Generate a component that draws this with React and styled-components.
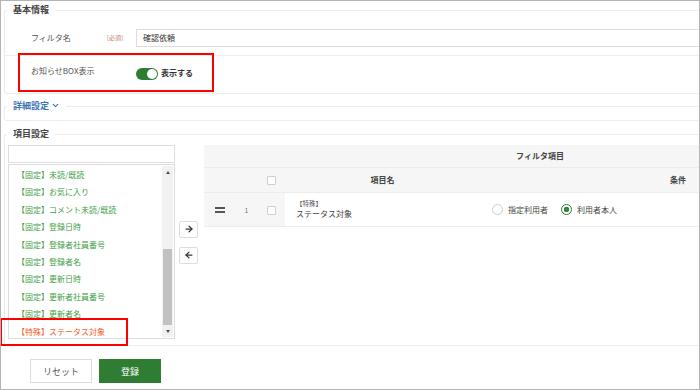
import styled, { createGlobalStyle } from 'styled-components';
import { ArrowRight, ArrowLeft, ChevronDown } from 'lucide-react';

const items = [
  { tag: '固定', name: '未読/既読' },
  { tag: '固定', name: 'お気に入り' },
  { tag: '固定', name: 'コメント未読/既読' },
  { tag: '固定', name: '登録日時' },
  { tag: '固定', name: '登録者社員番号' },
  { tag: '固定', name: '登録者名' },
  { tag: '固定', name: '更新日時' },
  { tag: '固定', name: '更新者社員番号' },
  { tag: '固定', name: '更新者名' },
  { tag: '特殊', name: 'ステータス対象', special: true },
];

const GlobalStyle = createGlobalStyle`
  body {
    margin: 0;
    background: #fff;
    font-family: "Noto Sans CJK JP", "Noto Sans", sans-serif;
    color: #555;
  }
  * { box-sizing: border-box; }
`;

const Frame = styled.div`
  position: relative;
  width: 700px;
  height: 390px;
  border: 1px solid #b4b4b4;
  overflow: hidden;
  background: #fff;
`;

const Inner = styled.div`
  width: 900px;
  padding: 2px 0 0 3px;
`;

const Fieldset = styled.fieldset`
  margin: ${p => p.$gap || 0}px 0 0;
  padding: ${p => p.$pt || 0}px 0 ${p => p.$pb || 0}px;
  border: 1px solid #ececec;
  border-right: none;
  border-radius: 3px;
  min-width: 0;
`;

const Legend = styled.legend`
  margin-left: 2px;
  padding: 0 6px;
  font-size: 9px;
  font-weight: bold;
  line-height: 14px;
  color: ${p => (p.$link ? '#3b74b8' : '#444')};

  svg {
    vertical-align: -1px;
    margin-left: 2px;
  }
`;

const FormRow = styled.div`
  position: relative;
  display: flex;
  align-items: ${p => (p.$top ? 'flex-start' : 'center')};
  padding: ${p => p.$pad};
  padding-left: 26px;
  border-bottom: ${p => (p.$last ? 'none' : '1px solid #eee')};
  font-size: 8px;
  line-height: 12px;
`;

const Label = styled.div`
  width: ${p => p.$w}px;
  color: #555;
`;

const Required = styled.span`
  width: 29px;
  font-size: 6px;
  color: #c07a6a;
`;

const TextInput = styled.div`
  flex: 1;
  height: 18px;
  border: 1px solid #ddd;
  padding: 0 6px;
  font-size: 8px;
  line-height: 16px;
  color: #333;
`;

const Toggle = styled.span`
  display: inline-flex;
  justify-content: flex-end;
  align-items: center;
  width: 22px;
  height: 12px;
  margin-top: 3px;
  padding: 1px;
  border-radius: 6px;
  background: #2e7d32;

  &::after {
    content: '';
    width: 10px;
    height: 10px;
    border-radius: 50%;
    background: #fff;
  }
`;

const ToggleText = styled.span`
  margin: 2px 0 0 3px;
  font-weight: bold;
  color: #333;
`;

const Columns = styled.div`
  display: flex;
  padding-left: 3px;
`;

const LeftCol = styled.div`
  width: 167px;
  display: flex;
  flex-direction: column;
  gap: 1px;
`;

const Search = styled.div`
  height: 18px;
  border: 1px solid #ddd;
`;

const ListBox = styled.div`
  display: flex;
  height: 175px;
  border: 1px solid #ddd;
  padding: 1px 1px 1px 0;
`;

const List = styled.ul`
  flex: 1;
  margin: 0;
  padding: 0 0 0 8px;
  list-style: none;
`;

const Item = styled.li`
  font-size: 8px;
  line-height: 17.4px;
  white-space: nowrap;
  color: ${p => (p.$special ? '#f4621f' : '#43a047')};
`;

const Scrollbar = styled.div`
  width: 11px;
  display: flex;
  flex-direction: column;
  background: #f1f1f1;
`;

const ScrollArrow = styled.div`
  height: 12px;
  display: flex;
  align-items: center;
  justify-content: center;

  &::after {
    content: '';
    border-left: 2.5px solid transparent;
    border-right: 2.5px solid transparent;
    ${p => (p.$down ? 'border-top' : 'border-bottom')}: 3px solid #505050;
  }
`;

const Track = styled.div`
  flex: 1;
  display: flex;
  flex-direction: column;
  justify-content: flex-end;
  padding: 0 1px;
`;

const Thumb = styled.div`
  height: 76px;
  background: #c1c1c1;
`;

const MoveCol = styled.div`
  width: 19px;
  margin-left: 4px;
  display: flex;
  flex-direction: column;
  justify-content: center;
  gap: 9px;
`;

const MoveButton = styled.button`
  width: 19px;
  height: 17px;
  padding: 0;
  display: flex;
  align-items: center;
  justify-content: center;
  border: 1px solid #ddd;
  border-radius: 2px;
  background: #fff;
  color: #333;
`;

const Table = styled.table`
  width: 672px;
  margin-left: 6px;
  align-self: flex-start;
  border-collapse: collapse;
  table-layout: fixed;
  font-size: 8px;
`;

const HeadCell = styled.th`
  height: ${p => p.$h}px;
  padding: 0;
  background: #f6f6f6;
  border-bottom: 1px solid #ececec;
  font-weight: bold;
  color: #444;
  text-align: center;
`;

const Cell = styled.td`
  height: 34px;
  padding: 0 0 0 ${p => p.$pl || 0}px;
  background: ${p => (p.$gray ? '#f6f6f6' : '#fff')};
  border-bottom: 1px solid #ececec;
  text-align: ${p => (p.$left ? 'left' : 'center')};
  vertical-align: middle;
`;

const Check = styled.span`
  display: inline-block;
  width: 9px;
  height: 9px;
  border: 1px solid #cfcfcf;
  border-radius: 1px;
  background: #fff;
  vertical-align: middle;
`;

const Handle = styled.span`
  display: inline-block;
  width: 10px;
  height: 6px;
  border-top: 2px solid #555;
  border-bottom: 2px solid #555;
  vertical-align: middle;
`;

const Num = styled.span`
  font-size: 6px;
  color: #666;
`;

const Tag = styled.div`
  font-size: 6.5px;
  line-height: 10px;
  color: #555;
`;

const ItemName = styled.div`
  line-height: 12px;
  color: #444;
`;

const RadioGroup = styled.div`
  display: flex;
  align-items: center;
  gap: 13px;
`;

const Radio = styled.label`
  display: flex;
  align-items: center;
  gap: 5px;
  color: #444;

  &::before {
    content: '';
    width: 9px;
    height: 9px;
    border-radius: 50%;
    border: 1px solid ${p => (p.$checked ? '#2e7d32' : '#ccc')};
    background: ${p => (p.$checked ? 'radial-gradient(circle, #2e8b3a 0 2.6px, #fff 3px)' : '#fff')};
  }
`;

const Footer = styled.div`
  display: flex;
  gap: 7px;
  padding: 13px 0 0 26px;
`;

const Button = styled.button`
  width: 62px;
  height: 24px;
  padding: 0;
  border: 1px solid ${p => (p.$primary ? '#2e7d32' : '#ddd')};
  background: ${p => (p.$primary ? '#2e7d32' : '#fff')};
  color: ${p => (p.$primary ? '#fff' : '#555')};
  font-family: inherit;
  font-size: 9px;
`;

const Callout = styled.div`
  position: absolute;
  left: ${p => p.$x}px;
  top: ${p => p.$y}px;
  width: ${p => p.$w}px;
  height: ${p => p.$h}px;
  border: 2px solid #ff0000;
  pointer-events: none;
`;

export default function App() {
  return (
    <>
      <GlobalStyle />
      <Frame>
        <Inner>
          <Fieldset>
            <Legend>基本情報</Legend>
            <FormRow $pad="12px 0 8px">
              <Label $w={76}>フィルタ名</Label>
              <Required>[必須]</Required>
              <TextInput>確認依頼</TextInput>
            </FormRow>
            <FormRow $top $last $pad="9px 0 13px">
              <Label $w={105}>お知らせBOX表示</Label>
              <Toggle />
              <ToggleText>表示する</ToggleText>
            </FormRow>
          </Fieldset>

          <Fieldset $gap={5} $pb={7}>
            <Legend $link>
              詳細設定
              <ChevronDown size={9} strokeWidth={3} />
            </Legend>
          </Fieldset>

          <Fieldset $gap={6} $pt={4} $pb={6}>
            <Legend>項目設定</Legend>
            <Columns>
              <LeftCol>
                <Search />
                <ListBox>
                  <List>
                    {items.map(it => (
                      <Item key={it.name} $special={it.special}>
                        【{it.tag}】{it.name}
                      </Item>
                    ))}
                  </List>
                  <Scrollbar>
                    <ScrollArrow />
                    <Track>
                      <Thumb />
                    </Track>
                    <ScrollArrow $down />
                  </Scrollbar>
                </ListBox>
              </LeftCol>

              <MoveCol>
                <MoveButton>
                  <ArrowRight size={10} strokeWidth={3} />
                </MoveButton>
                <MoveButton>
                  <ArrowLeft size={10} strokeWidth={3} />
                </MoveButton>
              </MoveCol>

              <Table>
                <colgroup>
                  <col style={{ width: 31 }} />
                  <col style={{ width: 23 }} />
                  <col style={{ width: 27 }} />
                  <col style={{ width: 195 }} />
                  <col />
                </colgroup>
                <thead>
                  <tr>
                    <HeadCell $h={22} colSpan={5}>フィルタ項目</HeadCell>
                  </tr>
                  <tr>
                    <HeadCell $h={25} />
                    <HeadCell $h={25} />
                    <HeadCell $h={25}><Check /></HeadCell>
                    <HeadCell $h={25}>項目名</HeadCell>
                    <HeadCell $h={25}>条件</HeadCell>
                  </tr>
                </thead>
                <tbody>
                  <tr>
                    <Cell $gray><Handle /></Cell>
                    <Cell $gray><Num>1</Num></Cell>
                    <Cell $gray><Check /></Cell>
                    <Cell $left $pl={11}>
                      <Tag>【特殊】</Tag>
                      <ItemName>ステータス対象</ItemName>
                    </Cell>
                    <Cell $left $pl={12}>
                      <RadioGroup>
                        <Radio>指定利用者</Radio>
                        <Radio $checked>利用者本人</Radio>
                      </RadioGroup>
                    </Cell>
                  </tr>
                </tbody>
              </Table>
            </Columns>
          </Fieldset>

          <Footer>
            <Button>リセット</Button>
            <Button $primary>登録</Button>
          </Footer>
        </Inner>

        <Callout $x={17} $y={52} $w={196} $h={39} />
        <Callout $x={-1} $y={317} $w={128} $h={28} />
      </Frame>
    </>
  );
}
